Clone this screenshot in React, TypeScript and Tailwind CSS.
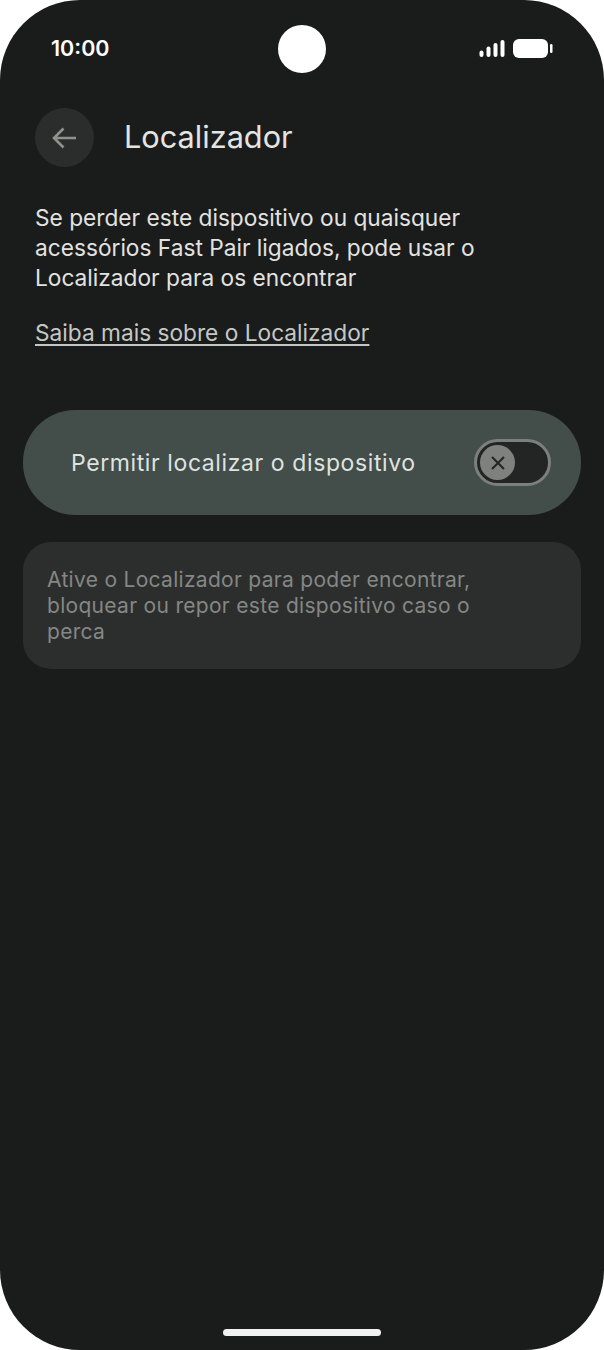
import React from 'react';

const StatusBar = () => (
  <div className="relative flex h-[98px] items-center justify-between pl-[51px] pr-[51px]">
    <span className="text-[21.5px] font-semibold leading-none text-white">10:00</span>
    <div className="absolute left-[278px] top-[25px] h-12 w-12 rounded-full bg-white" />
    <svg width="74" height="20" viewBox="0 0 74 20" fill="#fff">
      <rect x="0.5" y="11.5" width="4" height="6.5" rx="2" />
      <rect x="7.5" y="7.5" width="4" height="10.5" rx="2" />
      <rect x="14.5" y="4" width="4" height="14" rx="2" />
      <rect x="21.5" y="1" width="4" height="17" rx="2" />
      <rect x="34" y="0" width="35" height="19" rx="6" />
      <rect x="71" y="5" width="2.5" height="9" rx="1.2" />
    </svg>
  </div>
);

export default function App() {
  return (
    <div className="h-[1350px] w-[604px] bg-white font-['Inter',sans-serif]">
      <div className="relative flex h-full flex-col overflow-hidden rounded-[80px] bg-[#1a1c1b]">
        <StatusBar />

        {/* Header */}
        <div className="mt-2.5 flex items-center gap-[30px] pl-[35px]">
          <button className="flex h-[59px] w-[59px] items-center justify-center rounded-full bg-[#2b2d2c]">
            <svg className="-ml-px" width="28" height="28" viewBox="0 0 28 28" fill="none" stroke="#8f918f" strokeWidth="2.6">
              <path d="M26 14H4M13.5 4.5L4 14l9.5 9.5" />
            </svg>
          </button>
          <h1 className="-mt-px text-[30.7px] font-normal leading-none text-[#e4e5e3]">Localizador</h1>
        </div>

        {/* Description */}
        <div className="mt-[36px] px-[35px]">
          <p className="text-[22.7px] leading-[30px] text-[#e2e3e1]">
            Se perder este dispositivo ou quaisquer acessórios Fast Pair ligados, pode usar o Localizador para os encontrar
          </p>
          <a className="mt-[25px] inline-block text-[22.7px] leading-[30px] text-[#c5c7c5] underline underline-offset-[3px]">
            Saiba mais sobre o Localizador
          </a>
        </div>

        {/* Toggle row */}
        <div className="mx-[23px] mt-[62px] flex h-[105px] items-center justify-between rounded-[52px] bg-[#434d4a] pl-12 pr-[30px]">
          <span className="mt-0.5 text-[23px] tracking-[0.6px] text-[#dfe3e0]">Permitir localizar o dispositivo</span>
          <div className="flex h-[47px] w-[77px] items-center rounded-full border-[3px] border-[#7c7f7d] bg-[#232524] pl-[3px]">
            <div className="flex h-[35px] w-[35px] items-center justify-center rounded-full bg-[#7f817f]">
              <svg width="16" height="16" viewBox="0 0 16 16" fill="none" stroke="#232524" strokeWidth="2">
                <path d="M2 2l12 12M14 2L2 14" />
              </svg>
            </div>
          </div>
        </div>

        {/* Info card */}
        <div className="mx-[23px] mt-[27px] h-[127px] rounded-[28px] bg-[#2c2e2d] pl-6 pr-[60px] pt-[25px]">
          <p className="text-[21px] leading-[26px] tracking-[0.3px] text-[#858785]">
            Ative o Localizador para poder encontrar, bloquear ou repor este dispositivo caso o perca
          </p>
        </div>

        {/* Home indicator */}
        <div className="absolute bottom-[14px] left-[223px] h-[7px] w-[158px] rounded-full bg-[#f1f1f1]" />
      </div>
    </div>
  );
}
